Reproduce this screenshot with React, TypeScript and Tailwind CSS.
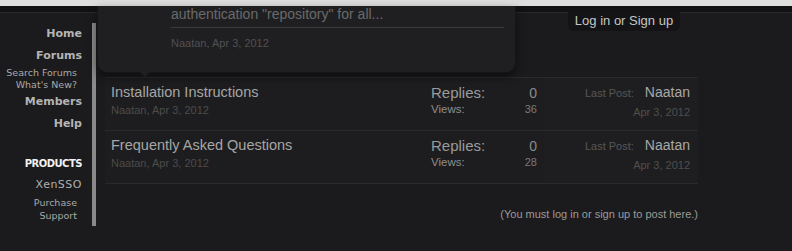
const sans = { fontFamily: '"Liberation Sans", Arial, sans-serif' };
const verdana = { fontFamily: '"DejaVu Sans", Verdana, sans-serif' };

type Thread = { title: string; author: string; date: string; replies: number; views: number; last: string };

const threads: Thread[] = [
  { title: "Installation Instructions", author: "Naatan", date: "Apr 3, 2012", replies: 0, views: 36, last: "Naatan" },
  { title: "Frequently Asked Questions", author: "Naatan", date: "Apr 3, 2012", replies: 0, views: 28, last: "Naatan" },
];

function Sidebar() {
  return (
    <div className="flex w-[96px] shrink-0 flex-col items-end pt-[10px]" style={verdana}>
      <div className="flex h-[203px] w-full flex-col items-end border-r-4 border-[#8a8a8a] pr-[10px] pt-[4px]">
        <a className="text-[11px] font-bold leading-[14px] text-[#b4b4b4]">Home</a>
        <a className="mt-[8px] text-[11px] font-bold leading-[14px] text-[#b4b4b4]">Forums</a>
        <a className="mt-[4px] pr-[5px] text-[9.5px] leading-[12px] text-[#a8a8a8]">Search Forums</a>
        <a className="pr-[5px] text-[9.5px] leading-[12px] text-[#a8a8a8]">What's New?</a>
        <a className="mt-[4px] text-[11px] font-bold leading-[14px] text-[#b4b4b4]">Members</a>
        <a className="mt-[8px] text-[11px] font-bold leading-[14px] text-[#b4b4b4]">Help</a>
        <div className="mt-[26px] text-[10px] font-bold leading-[13px] tracking-[-0.5px] text-[#f2f2f2]">PRODUCTS</div>
        <a className="mt-[8px] text-[11px] leading-[14px] tracking-[0.5px] text-[#b0b0b0]">XenSSO</a>
        <a className="mt-[4px] pr-[5px] text-[9.5px] leading-[13px] text-[#a8a8a8]">Purchase</a>
        <a className="pr-[5px] text-[9.5px] leading-[13px] text-[#a8a8a8]">Support</a>
      </div>
    </div>
  );
}

function ThreadRow({ t }: { t: Thread }) {
  return (
    <div className="flex h-[53px] border-b border-[#2a2a2c] bg-[#1d1d1f]" style={sans}>
      <div className="flex flex-1 flex-col pl-[6px] pt-[5px]">
        <div className="text-[14.5px] leading-[18px] text-[#a6a6a6]">{t.title}</div>
        <div className="mt-[2px] text-[11px] leading-[14px] text-[#4c4c4c]">
          {t.author}, {t.date}
        </div>
      </div>
      <div className="flex w-[114px] flex-col pt-[6px] pr-[8px]">
        <div className="flex items-baseline justify-between">
          <span className="text-[15px] leading-[18px] text-[#9a9a9a]">Replies:</span>
          <span className="text-[14px] leading-[18px] text-[#8a8a8a]">{t.replies}</span>
        </div>
        <div className="flex items-baseline justify-between">
          <span className="text-[11.5px] leading-[14px] text-[#8e8e8e]">Views:</span>
          <span className="text-[11px] leading-[14px] text-[#7a7a7a]">{t.views}</span>
        </div>
      </div>
      <div className="flex w-[153px] flex-col items-end bg-[#1e1e20] pr-[8px] pt-[5px]">
        <div className="flex items-baseline gap-[11px]">
          <span className="text-[11px] text-[#565656]">Last Post:</span>
          <span className="text-[14px] leading-[18px] text-[#a8a8a8]">{t.last}</span>
        </div>
        <div className="mt-[3px] text-[11px] leading-[14px] text-[#4e4e4e]">{t.date}</div>
      </div>
    </div>
  );
}

export default function App() {
  return (
    <div className="relative h-[251px] w-[792px] overflow-hidden bg-[#1b1b1d]">
      <div className="h-[6px] bg-[#dedede]" />
      <div className="flex h-[6px] bg-[#121214]" />
      <div className="relative h-0 border-t border-[#2a2a2c]">
        <div
          className="absolute left-[568px] top-[-4px] flex h-[22px] w-[112px] items-center justify-center rounded-b-[6px] bg-[#141416] pt-[1px] text-[13px] text-[#c6c6c6]"
          style={sans}
        >
          Log in or Sign up
        </div>
      </div>
      <div className="flex">
        <Sidebar />
        <div className="flex flex-1 flex-col pl-[9px] pt-[64px]">
          <div className="w-[593px] border-t border-[#2a2a2c]">
            {threads.map((t) => (
              <ThreadRow key={t.title} t={t} />
            ))}
          </div>
          <div className="w-[593px] pt-[22px] text-right text-[11px] text-[#9a9a9a]" style={sans}>
            (You must log in or sign up to post here.)
          </div>
        </div>
      </div>

      {/* preview tooltip */}
      <div
        className="absolute left-[97px] top-[6px] h-[67px] w-[419px] rounded-b-[10px] border border-t-0 border-[#161618] bg-[#1f1f21] shadow-[0_4px_10px_rgba(0,0,0,0.5)]"
        style={sans}
      >
        <div className="ml-[73px] mr-[11px] border-b border-[#3a3a3c] pb-[5px] text-[14px] leading-[16px] text-[#6a6a6a]">
          authentication "repository" for all...
        </div>
        <div className="ml-[73px] mt-[8px] text-[11px] leading-[14px] text-[#505052]">Naatan, Apr 3, 2012</div>
        <div className="absolute bottom-[-5px] left-[42px] h-0 w-0 border-x-[5px] border-t-[5px] border-x-transparent border-t-[#1f1f21]" />
      </div>
    </div>
  );
}
